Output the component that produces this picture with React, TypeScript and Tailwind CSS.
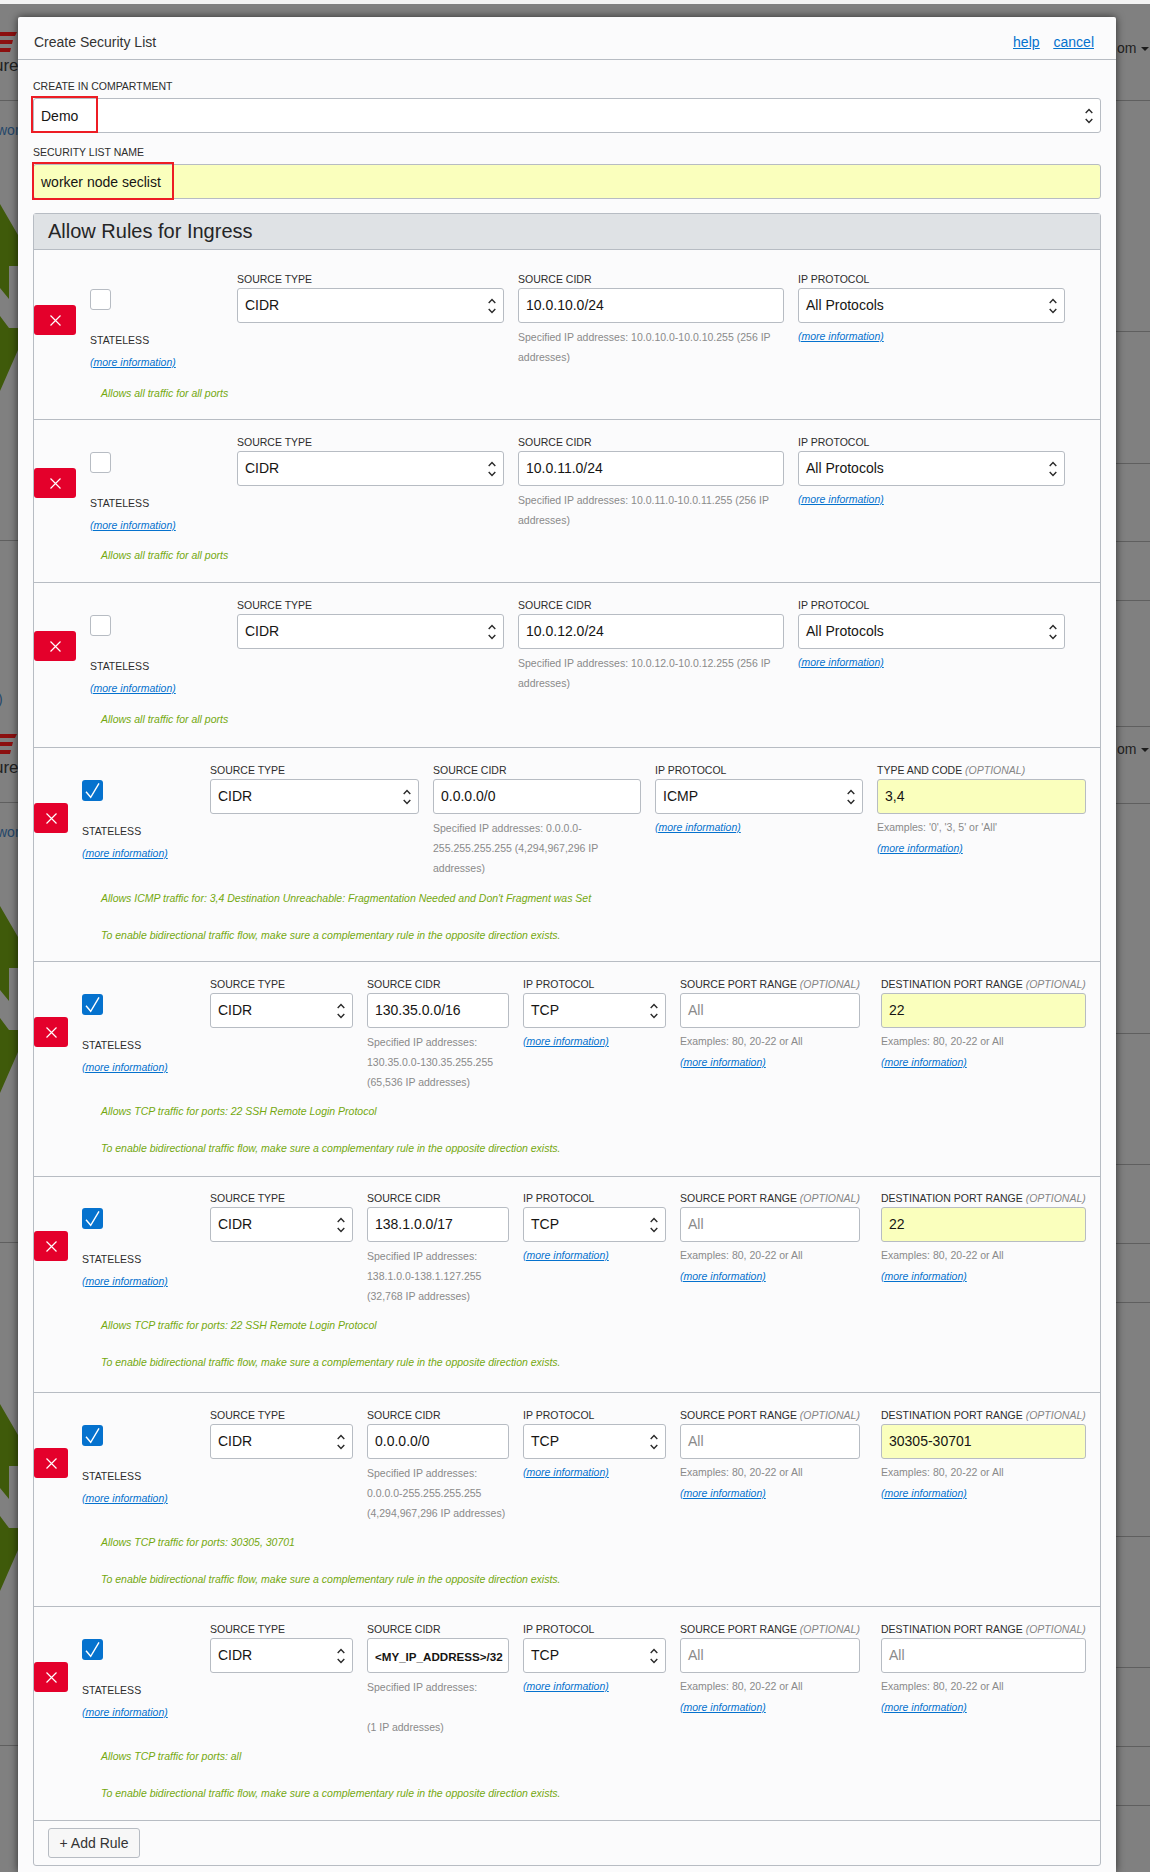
import type { ReactNode } from 'react';

type Rule = {
  rowClass: string;
  topClass: string;
  fieldsClass: string;
  statelessClass: string;
  buttonClass: string;
  checked: boolean;
  notes: string[];
  fields: ReactNode[];
};

const BIDIRECTIONAL = 'To enable bidirectional traffic flow, make sure a complementary rule in the opposite direction exists.';
const YELLOW = 'bg-[#faffbd]';

const backdropLines = [
  { x: 0, y: 100 }, { x: 0, y: 540 }, { x: 0, y: 802 }, { x: 0, y: 1242 }, { x: 0, y: 1745 },
  { x: 1116, y: 100 }, { x: 1116, y: 331 }, { x: 1116, y: 463 }, { x: 1116, y: 541 }, { x: 1116, y: 600 },
  { x: 1116, y: 726 }, { x: 1116, y: 803 }, { x: 1116, y: 1033 }, { x: 1116, y: 1164 }, { x: 1116, y: 1243 },
  { x: 1116, y: 1302 }, { x: 1116, y: 1536 }, { x: 1116, y: 1667 }, { x: 1116, y: 1746 }, { x: 1116, y: 1805 },
];

function arrow(c: number) {
  return `0,${c - 62} 18,${c - 31} 18,${c} 9,${c} 9,${c + 33} 0,${c + 22}`;
}

function arrowLower(c: number) {
  return `0,${c + 50} 9,${c + 62} 18,${c + 62} 18,${c + 84} 0,${c + 125}`;
}

function Backdrop() {
  return (
    <div aria-hidden className="absolute inset-0 overflow-hidden">
      <div className="h-[4px] bg-[#f3f3f3]" />
      <svg className="absolute left-0 top-0" width="1150" height="1872">
        {backdropLines.map((l) => (
          <rect key={`${l.x}-${l.y}`} x={l.x} y={l.y} width={l.x === 0 ? 18 : 34} height="1" fill="#5f5f5f" />
        ))}
        {[266, 968, 1466].map((c) => (
          <g key={c} fill="#3f5a0a">
            <polygon points={arrow(c)} />
            <polygon points={arrowLower(c)} />
          </g>
        ))}
        {[0, 702].map((o) => (
          <g key={o} fill="#8c1010">
            <polygon points={`0,${32 + o} 17,${32 + o} 15,${36 + o} 0,${36 + o}`} />
            <polygon points={`0,${40 + o} 13,${40 + o} 12,${44 + o} 0,${44 + o}`} />
            <polygon points={`0,${48 + o} 11,${48 + o} 10,${52 + o} 0,${52 + o}`} />
          </g>
        ))}
        {[47, 748].map((y) => (
          <polygon key={y} points={`1141,${y} 1149,${y} 1145,${y + 4}`} fill="#1c1c1c" />
        ))}
      </svg>
      <span className="absolute left-[-6px] top-[56px] text-[17px] leading-[20px] text-[#222]">ure</span>
      <span className="absolute left-[-6px] top-[758px] text-[17px] leading-[20px] text-[#222]">ure</span>
      <span className="absolute left-[-3px] top-[122px] text-[14px] leading-[16px] text-[#24476a]">wor</span>
      <span className="absolute left-[-3px] top-[824px] text-[14px] leading-[16px] text-[#24476a]">wor</span>
      <span className="absolute left-[-2px] top-[691px] text-[14px] leading-[16px] text-[#24476a]">)</span>
      <span className="absolute left-[1117px] top-[40px] text-[14px] leading-[16px] text-[#222]">om</span>
      <span className="absolute left-[1117px] top-[741px] text-[14px] leading-[16px] text-[#222]">om</span>
    </div>
  );
}

function Label({ children, optional }: { children: ReactNode; optional?: boolean }) {
  return (
    <div className="h-[17px] whitespace-nowrap text-[10.5px] leading-[17px] text-[#2d2d2d]">
      {children}
      {optional && <em className="text-[#858585]"> (OPTIONAL)</em>}
    </div>
  );
}

function Select({ value, nudge }: { value: string; nudge?: boolean }) {
  return (
    <div className="flex h-[35px] items-center justify-between rounded-[3px] border border-[#b7bcc3] bg-white pl-[7px] pr-[7px] text-[14px] text-[#161513]">
      <span className={nudge ? 'pt-[2px]' : ''}>{value}</span>
      <svg width="8" height="16" viewBox="0 0 8 16" fill="none" stroke="#2a2a2a" strokeWidth="1.4">
        <path d="M0.7 5 4 1.5 7.3 5" />
        <path d="M0.7 11 4 14.5 7.3 11" />
      </svg>
    </div>
  );
}

function Input({ value, placeholder, yellow, small, nudge }: { value?: string; placeholder?: string; yellow?: boolean; small?: boolean; nudge?: boolean }) {
  return (
    <div
      className={`flex h-[35px] items-center overflow-hidden whitespace-nowrap rounded-[3px] border border-[#b7bcc3] pl-[7px] ${small ? 'pt-[3px] text-[11.6px] font-bold' : 'text-[14px]'} ${nudge ? 'pt-[2px]' : ''} ${yellow ? YELLOW : 'bg-white'} ${placeholder ? 'text-[#8a8a8a]' : 'text-[#161513]'}`}
    >
      {value ?? placeholder}
    </div>
  );
}

function More() {
  return (
    <a className="block whitespace-nowrap text-[10.5px] italic leading-[21px] text-[#0572ce] underline">(more information)</a>
  );
}

function Hint({ children }: { children: ReactNode }) {
  return <div className="text-[10.5px] leading-[20px] text-[#8a8a8a]">{children}</div>;
}

function Under({ children }: { children: ReactNode }) {
  return <div className="mt-[3px]">{children}</div>;
}

function SourceType() {
  return (
    <div>
      <Label>SOURCE TYPE</Label>
      <Select value="CIDR" />
    </div>
  );
}

function Cidr({ value, hint, small }: { value: string; hint: ReactNode; small?: boolean }) {
  return (
    <div>
      <Label>SOURCE CIDR</Label>
      <Input value={value} small={small} />
      <div className="mt-[4px]">
        <Hint>{hint}</Hint>
      </div>
    </div>
  );
}

function Protocol({ value }: { value: string }) {
  return (
    <div>
      <Label>IP PROTOCOL</Label>
      <Select value={value} />
      <Under>
        <More />
      </Under>
    </div>
  );
}

function PortRange({ label, value, className }: { label: string; value?: string; className?: string }) {
  return (
    <div className={className}>
      <Label optional>{label}</Label>
      {value ? <Input value={value} yellow /> : <Input placeholder="All" />}
      <Under>
        <Hint>Examples: 80, 20-22 or All</Hint>
        <div className="mt-[1px]">
          <More />
        </div>
      </Under>
    </div>
  );
}

function tcpFields(cidr: string, hint: ReactNode, dest?: string, small?: boolean) {
  return [
    <SourceType key="type" />,
    <Cidr key="cidr" value={cidr} hint={hint} small={small} />,
    <Protocol key="proto" value="TCP" />,
    <PortRange key="src" label="SOURCE PORT RANGE" className="pr-[7px]" />,
    <PortRange key="dst" label="DESTINATION PORT RANGE" value={dest} />,
  ];
}

function allFields(cidr: string, range: string) {
  return [
    <SourceType key="type" />,
    <Cidr key="cidr" value={cidr} hint={`Specified IP addresses: ${range} (256 IP addresses)`} />,
    <Protocol key="proto" value="All Protocols" />,
  ];
}

const BASIC_GRID = 'grid grid-cols-[267px_266px_267px] gap-x-[14px]';
const TCP_GRID = 'grid grid-cols-[143px_142px_143px_187px_205px] gap-x-[14px]';
const SSH = 'Allows TCP traffic for ports: 22 SSH Remote Login Protocol';

const rules: Rule[] = [
  {
    rowClass: 'h-[170px]',
    topClass: 'h-[133px]',
    fieldsClass: `${BASIC_GRID} pt-[21px]`,
    statelessClass: 'w-[147px] pt-[39px]',
    buttonClass: 'mt-[55px] w-[42px]',
    checked: false,
    notes: ['Allows all traffic for all ports'],
    fields: allFields('10.0.10.0/24', '10.0.10.0-10.0.10.255'),
  },
  {
    rowClass: 'h-[163px]',
    topClass: 'h-[125px]',
    fieldsClass: `${BASIC_GRID} pt-[14px]`,
    statelessClass: 'w-[147px] pt-[32px]',
    buttonClass: 'mt-[48px] w-[42px]',
    checked: false,
    notes: ['Allows all traffic for all ports'],
    fields: allFields('10.0.11.0/24', '10.0.11.0-10.0.11.255'),
  },
  {
    rowClass: 'h-[165px]',
    topClass: 'h-[126px]',
    fieldsClass: `${BASIC_GRID} pt-[14px]`,
    statelessClass: 'w-[147px] pt-[32px]',
    buttonClass: 'mt-[48px] w-[42px]',
    checked: false,
    notes: ['Allows all traffic for all ports'],
    fields: allFields('10.0.12.0/24', '10.0.12.0-10.0.12.255'),
  },
  {
    rowClass: 'h-[214px]',
    topClass: 'h-[140px]',
    fieldsClass: 'grid grid-cols-[209px_208px_208px_209px] gap-x-[14px] pt-[14px]',
    statelessClass: 'w-[128px] pt-[32px]',
    buttonClass: 'mt-[55px] w-[34px]',
    checked: true,
    notes: ["Allows ICMP traffic for: 3,4 Destination Unreachable: Fragmentation Needed and Don't Fragment was Set", BIDIRECTIONAL],
    fields: [
      <SourceType key="type" />,
      <Cidr key="cidr" value="0.0.0.0/0" hint="Specified IP addresses: 0.0.0.0-255.255.255.255 (4,294,967,296 IP addresses)" />,
      <Protocol key="proto" value="ICMP" />,
      <div key="code">
        <Label optional>TYPE AND CODE</Label>
        <Input value="3,4" yellow />
        <Under>
          <Hint>Examples: '0', '3, 5' or 'All'</Hint>
          <div className="mt-[1px]">
            <More />
          </div>
        </Under>
      </div>,
    ],
  },
  {
    rowClass: 'h-[215px]',
    topClass: 'h-[139px]',
    fieldsClass: `${TCP_GRID} pt-[14px]`,
    statelessClass: 'w-[128px] pt-[32px]',
    buttonClass: 'mt-[55px] w-[34px]',
    checked: true,
    notes: [SSH, BIDIRECTIONAL],
    fields: tcpFields('130.35.0.0/16', 'Specified IP addresses: 130.35.0.0-130.35.255.255 (65,536 IP addresses)', '22'),
  },
  {
    rowClass: 'h-[216px]',
    topClass: 'h-[138px]',
    fieldsClass: `${TCP_GRID} pt-[13px]`,
    statelessClass: 'w-[128px] pt-[31px]',
    buttonClass: 'mt-[54px] w-[34px]',
    checked: true,
    notes: [SSH, BIDIRECTIONAL],
    fields: tcpFields('138.1.0.0/17', 'Specified IP addresses: 138.1.0.0-138.1.127.255 (32,768 IP addresses)', '22'),
  },
  {
    rowClass: 'h-[214px]',
    topClass: 'h-[139px]',
    fieldsClass: `${TCP_GRID} pt-[14px]`,
    statelessClass: 'w-[128px] pt-[32px]',
    buttonClass: 'mt-[55px] w-[34px]',
    checked: true,
    notes: ['Allows TCP traffic for ports: 30305, 30701', BIDIRECTIONAL],
    fields: tcpFields('0.0.0.0/0', 'Specified IP addresses: 0.0.0.0-255.255.255.255 (4,294,967,296 IP addresses)', '30305-30701'),
  },
  {
    rowClass: 'h-[214px]',
    topClass: 'h-[139px]',
    fieldsClass: `${TCP_GRID} pt-[14px]`,
    statelessClass: 'w-[128px] pt-[32px]',
    buttonClass: 'mt-[55px] w-[34px]',
    checked: true,
    notes: ['Allows TCP traffic for ports: all', BIDIRECTIONAL],
    fields: tcpFields(
      '<MY_IP_ADDRESS>/32',
      <>
        Specified IP addresses:
        <br />
        <br />
        (1 IP addresses)
      </>,
      undefined,
      true,
    ),
  },
];

function Checkbox({ checked }: { checked: boolean }) {
  if (!checked) {
    return <div className="h-[21px] w-[21px] rounded-[3px] border border-[#b7bcc3] bg-white" />;
  }
  return (
    <div className="h-[21px] w-[21px] rounded-[3px] bg-[#0572ce]">
      <svg width="21" height="21" viewBox="0 0 21 21" fill="none" stroke="white" strokeWidth="1.4">
        <path d="M4 11.7 8.7 17.3 17 3.3" />
      </svg>
    </div>
  );
}

function RuleRow({ rule }: { rule: Rule }) {
  return (
    <div className={`border-b border-[#b7bcc3] ${rule.rowClass}`}>
      <div className={`flex ${rule.topClass}`}>
        <button className={`flex h-[30px] shrink-0 items-center justify-center rounded-[3px] bg-[#e4002b] ${rule.buttonClass}`}>
          <svg width="11" height="11" viewBox="0 0 11 11" stroke="white" strokeWidth="1.2">
            <path d="M0.5 0.5 10.5 10.5M10.5 0.5 0.5 10.5" />
          </svg>
        </button>
        <div className={`ml-[14px] shrink-0 ${rule.statelessClass}`}>
          <Checkbox checked={rule.checked} />
          <div className="mt-[22px] text-[10.5px] leading-[16px] text-[#2d2d2d]">STATELESS</div>
          <div className="mt-[4px] leading-[16px]">
            <More />
          </div>
        </div>
        <div className={rule.fieldsClass}>{rule.fields}</div>
      </div>
      <div className="ml-[67px] flex flex-col gap-[17px]">
        {rule.notes.map((note) => (
          <p key={note} className="text-[10.5px] italic leading-[20px] text-[#74a80f]">
            {note}
          </p>
        ))}
      </div>
    </div>
  );
}

export default function App() {
  return (
    <div className="relative h-[1872px] w-[1150px] overflow-hidden bg-[#808080] font-['Liberation_Sans',Arial,sans-serif]">
      <Backdrop />
      <div className="relative ml-[18px] mt-[17px] inline-block h-[1855px] w-[1098px] rounded-t-[2px] bg-[#fbfbfc] align-top shadow-[0_0_9px_rgba(0,0,0,0.65)]">
        <div className="flex h-[43px] items-center justify-between border-b border-[#b7bcc3] pl-[16px] pr-[22px] pt-[9px] text-[14px]">
          <span className="text-[#333]">Create Security List</span>
          <div className="flex gap-[14px] text-[#0572ce] underline">
            <a>help</a>
            <a>cancel</a>
          </div>
        </div>

        <div className="pl-[15px] pr-[15px] pt-[18px]">
          <Label>CREATE IN COMPARTMENT</Label>
          <div className="relative mt-[3px]">
            <Select value="Demo" nudge />
            <div className="absolute -top-[2px] left-[-2px] h-[37px] w-[67px] border-[2.5px] border-[#ed1c24]" />
          </div>

          <div className="mt-[11px]">
            <Label>SECURITY LIST NAME</Label>
          </div>
          <div className="relative mt-[3px]">
            <Input value="worker node seclist" yellow nudge />
            <div className="absolute -top-[2px] left-[-1px] h-[38px] w-[142px] border-[2.5px] border-[#ed1c24]" />
          </div>

          <div className="mt-[14px] rounded-[3px] border border-[#b7bcc3]">
            <div className="flex h-[36px] items-center border-b border-[#b7bcc3] bg-[#dfe2e5] px-[14px] pb-[2px] text-[20px] text-[#252525]">
              Allow Rules for Ingress
            </div>
            {rules.map((rule, i) => (
              <RuleRow key={i} rule={rule} />
            ))}
            <div className="h-[44px] px-[14px] pt-[7px]">
              <button className="h-[30px] w-[92px] rounded-[3px] border border-[#b7bcc3] bg-[#f7f7f7] text-[14px] text-[#333]">
                + Add Rule
              </button>
            </div>
          </div>
        </div>
      </div>
    </div>
  );
}
